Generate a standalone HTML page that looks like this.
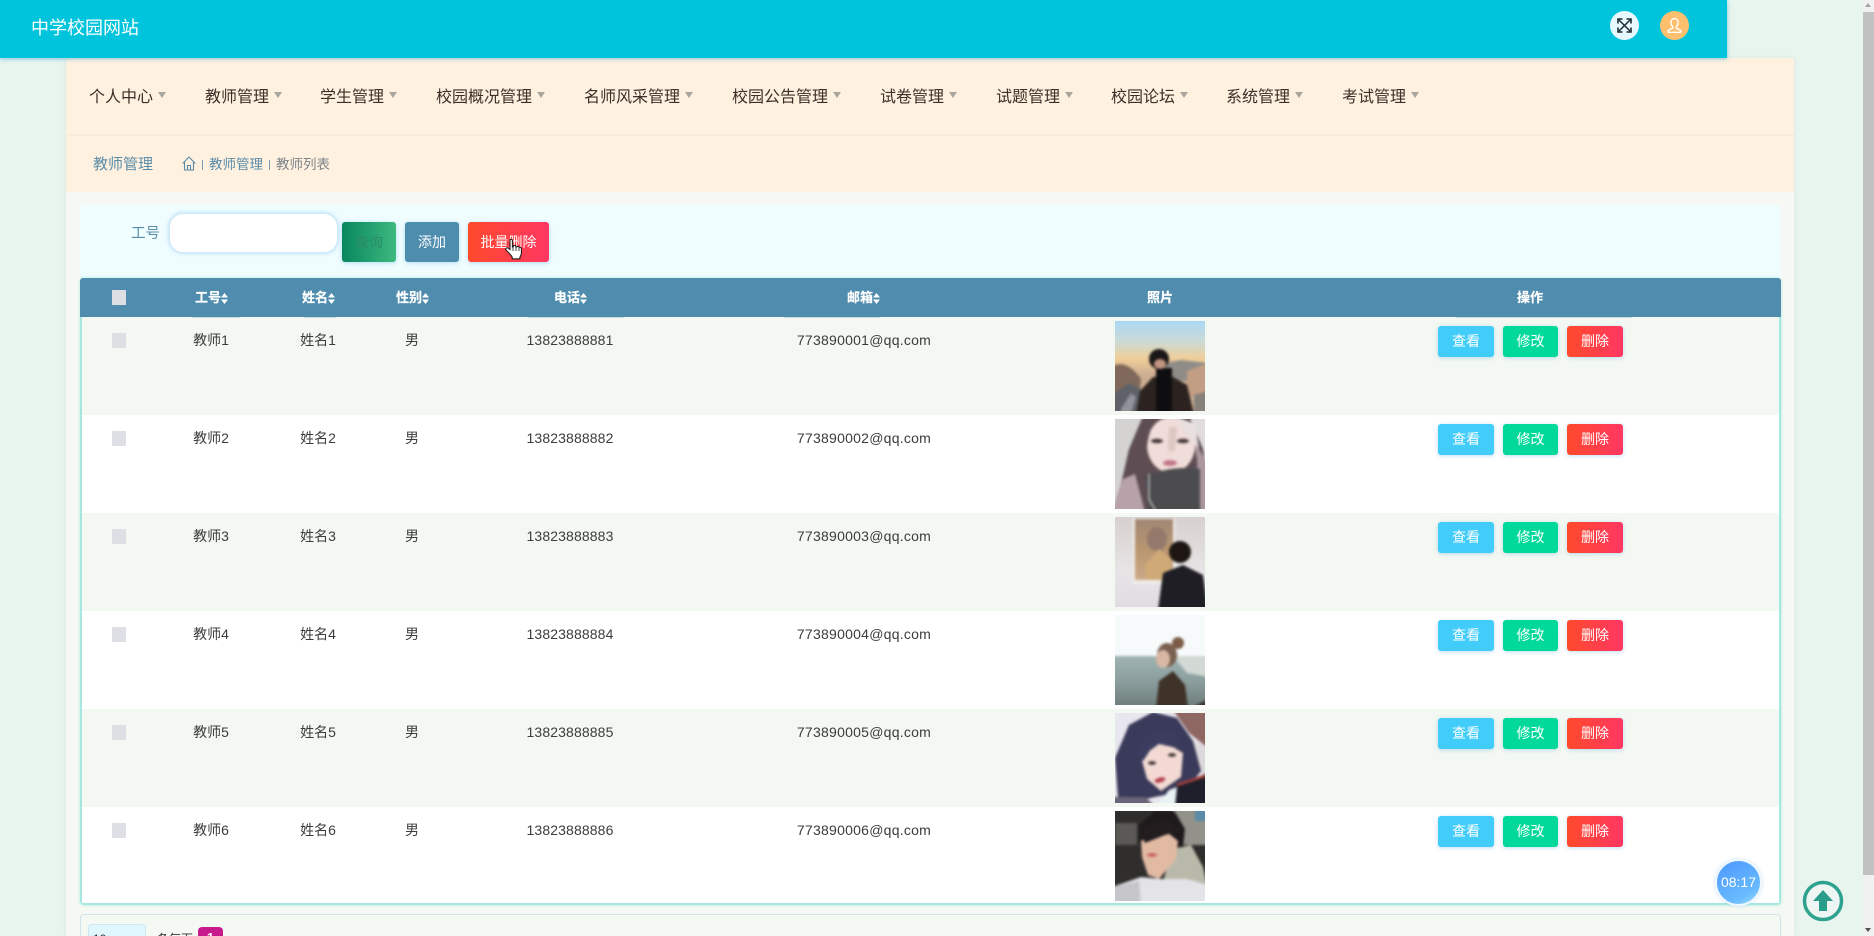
<!DOCTYPE html>
<html lang="zh"><head><meta charset="utf-8"><title>中学校园网站</title>
<style>
*{box-sizing:border-box}
html,body{margin:0;padding:0;width:1874px;height:936px;overflow:hidden;background:#E8F4EE;font-family:"Liberation Sans","Noto Sans CJK SC",sans-serif;color:#333}
div,span,svg{position:absolute}
#root{left:0;top:0;width:1874px;height:936px;overflow:hidden;background:#E8F4EE}
.nav{top:88px;height:20px;line-height:20px;font-size:16px;color:#3a3028;white-space:nowrap}
.car{top:92px;width:0;height:0;border-left:4.5px solid transparent;border-right:4.5px solid transparent;border-top:6px solid #aaa69e}
.btn{height:31px;line-height:30px;text-align:center;font-size:14px;color:#fff;border-radius:3px;box-shadow:0 1px 4px rgba(70,160,220,.35)}
.th{top:288px;height:20px;line-height:20px;font-size:13px;font-weight:bold;color:#fff;white-space:nowrap;-webkit-text-stroke:.2px #fff}
.ul{top:317px;height:1px;background:#ced9dc}
.r{left:82px;width:1697px;height:98px}
.odd{background:#F4F8F2}.even{background:#fff}
.cb{left:30px;top:16px;width:14px;height:15px;background:#DDDFE4}
.t{top:13px;height:20px;line-height:20px;font-size:14px;text-align:center;color:#3c3c3c;white-space:nowrap}
.c1{left:89px;width:80px}.c2{left:196px;width:80px}.c3{left:300px;width:60px}
.c4{left:408px;width:160px;letter-spacing:.12px}.c5{left:662px;width:240px;letter-spacing:.25px}
.b1{left:1356px;top:9px;width:56px;background:#42CCF9}
.b2{left:1421px;top:9px;width:55px;background:#00D99A}
.b3{left:1485px;top:9px;width:56px;background:linear-gradient(90deg,#FF4A2C,#FF3762)}
.ph{left:1033px;top:4px;width:90px;height:90px;overflow:hidden}
.ph g{filter:blur(1.2px)}
</style></head>
<body>
<div id="root">
<div style="left:0;top:0;width:1727px;height:58px;background:#00C4DC;box-shadow:0 1px 4px rgba(60,170,210,.6);z-index:3">
  <div style="left:31px;top:16px;height:24px;line-height:24px;font-size:18px;color:#fff;white-space:nowrap">中学校园网站</div>
  <div style="left:1610px;top:11px;width:29px;height:29px;border-radius:50%;background:#E8F8FF"></div>
  <svg style="left:1610px;top:11px" width="29" height="29" viewBox="0 0 29 29" fill="none" stroke="#1d2a33" stroke-width="1.5"><path d="M9 9L20 20M20 9L9 20"/><path d="M8 12.5V8H12.5M16.5 8H21V12.5M21 16.5V21H16.5M12.5 21H8V16.5" stroke-width="1.6"/></svg>
  <div style="left:1660px;top:11px;width:29px;height:29px;border-radius:50%;background:#FEBF6E"></div>
  <svg style="left:1660px;top:11px" width="29" height="29" viewBox="0 0 29 29" fill="none" stroke="#fff" stroke-width="1.4"><path d="M14.5 7.5c-2.4 0-3.6 1.9-3.6 4 0 1.8.8 3.2 1.8 4.1v1.6c-1.8.6-4.2 1.5-4.7 2.9-.2.6 0 1.2.7 1.2h11.6c.7 0 .9-.6.7-1.2-.5-1.4-2.9-2.3-4.7-2.9v-1.6c1-.9 1.8-2.3 1.8-4.1 0-2.1-1.2-4-3.6-4z"/></svg>
</div>

<div style="left:66px;top:58px;width:1728px;height:878px;background:#F6F9F3;box-shadow:0 0 3px rgba(200,215,205,.5)"></div>
<div style="left:66px;top:58px;width:1728px;height:134px;background:#FFF1E0"></div>
<div style="left:66px;top:134px;width:1728px;height:2px;background:#F8EBDB"></div>

<div class="nav" style="left:89px">个人中心</div><div class="car" style="left:158px"></div>
<div class="nav" style="left:205px">教师管理</div><div class="car" style="left:274px"></div>
<div class="nav" style="left:320px">学生管理</div><div class="car" style="left:389px"></div>
<div class="nav" style="left:436px">校园概况管理</div><div class="car" style="left:537px"></div>
<div class="nav" style="left:584px">名师风采管理</div><div class="car" style="left:685px"></div>
<div class="nav" style="left:732px">校园公告管理</div><div class="car" style="left:833px"></div>
<div class="nav" style="left:880px">试卷管理</div><div class="car" style="left:949px"></div>
<div class="nav" style="left:996px">试题管理</div><div class="car" style="left:1065px"></div>
<div class="nav" style="left:1111px">校园论坛</div><div class="car" style="left:1180px"></div>
<div class="nav" style="left:1226px">系统管理</div><div class="car" style="left:1295px"></div>
<div class="nav" style="left:1342px">考试管理</div><div class="car" style="left:1411px"></div>

<div style="left:93px;top:155px;height:20px;line-height:20px;font-size:15px;color:#5A8CA8;white-space:nowrap">教师管理</div>
<svg style="left:182px;top:156px" width="14" height="15" viewBox="0 0 14 15" fill="none" stroke="#5A8CA8" stroke-width="1.1"><path d="M.7 7.5L7 1l6.3 6.5M2.5 6v8h9V6M5.5 14V9.5h3V14"/></svg>
<div style="left:202px;top:160px;width:1px;height:10px;background:#7b9cb0"></div>
<div style="left:209px;top:155px;height:20px;line-height:20px;font-size:13.5px;color:#5A8CA8;white-space:nowrap">教师管理</div>
<div style="left:269px;top:160px;width:1px;height:10px;background:#7b9cb0"></div>
<div style="left:276px;top:155px;height:20px;line-height:20px;font-size:13.5px;color:#7d8488;white-space:nowrap">教师列表</div>

<div style="left:80px;top:205px;width:1701px;height:74px;background:#EFFDFF;border-radius:4px"></div>
<div style="left:131px;top:224px;height:20px;line-height:20px;font-size:14.5px;color:#5A8CA8;white-space:nowrap">工号</div>
<div style="left:169px;top:213px;width:169px;height:40px;background:#fff;border:1px solid #D2E9F8;border-radius:14px;box-shadow:0 0 4px rgba(120,190,240,.6)"></div>
<div class="btn" style="left:342px;top:222px;width:54px;height:40px;line-height:40px;background:linear-gradient(90deg,#08875F,#3DB97F);color:#2B8B66">查询</div>
<div class="btn" style="left:405px;top:222px;width:54px;height:40px;line-height:40px;background:#4F8DAF">添加</div>
<div class="btn" style="left:468px;top:222px;width:81px;height:40px;line-height:40px;background:linear-gradient(90deg,#FF4A2C,#FF3762)">批量删除</div>

<div style="left:80px;top:278px;width:1701px;height:627px;background:#fff;border:2px solid #A6E8E0;border-radius:4px;box-shadow:0 0 3px rgba(140,225,215,.7)"></div>
<div style="left:80px;top:278px;width:1701px;height:39px;background:#4F8CAE;border-radius:3px 3px 0 0"></div>
<div style="left:112px;top:290px;width:14px;height:15px;background:#DDDFE4"></div>
<div class="th" style="left:195px">工号</div><div class="th" style="left:302px">姓名</div><div class="th" style="left:396px">性别</div><div class="th" style="left:554px">电话</div><div class="th" style="left:847px">邮箱</div><div class="th" style="left:1147px">照片</div><div class="th" style="left:1517px">操作</div>
<svg style="left:221px;top:293px" width="7" height="11"><path d="M0 4.5L3.5 0L7 4.5ZM0 6.5L3.5 11L7 6.5Z" fill="#fff"/></svg>
<svg style="left:328px;top:293px" width="7" height="11"><path d="M0 4.5L3.5 0L7 4.5ZM0 6.5L3.5 11L7 6.5Z" fill="#fff"/></svg>
<svg style="left:422px;top:293px" width="7" height="11"><path d="M0 4.5L3.5 0L7 4.5ZM0 6.5L3.5 11L7 6.5Z" fill="#fff"/></svg>
<svg style="left:580px;top:293px" width="7" height="11"><path d="M0 4.5L3.5 0L7 4.5ZM0 6.5L3.5 11L7 6.5Z" fill="#fff"/></svg>
<svg style="left:873px;top:293px" width="7" height="11"><path d="M0 4.5L3.5 0L7 4.5ZM0 6.5L3.5 11L7 6.5Z" fill="#fff"/></svg>

<div class="r odd" style="top:317px"><div class="cb"></div><div class="t c1">教师1</div><div class="t c2">姓名1</div><div class="t c3">男</div><div class="t c4">13823888881</div><div class="t c5">773890001@qq.com</div>
<svg class="ph" viewBox="0 0 90 90"><defs><linearGradient id="s1" x1="0" y1="0" x2="0" y2="1"><stop offset="0" stop-color="#A6D8F8"/><stop offset=".25" stop-color="#CCDAD6"/><stop offset=".42" stop-color="#F0CE98"/><stop offset=".6" stop-color="#CBAD92"/></linearGradient></defs><g><rect x="-3" y="-3" width="96" height="96" fill="url(#s1)"/><path d="M50 42L66 39L93 42V60H50Z" fill="#8F8C88"/><path d="M72 50L93 42V76H72Z" fill="#C29E84"/><path d="M-3 45Q12 38 26 58L24 76H-3Z" fill="#80695A"/><path d="M-3 93V74L14 62L26 68L22 93Z" fill="#5E6268"/><path d="M6 88L16 72L21 76L16 93H6Z" fill="#90939A"/><path d="M21 93L25 70L38 56H58L72 64L79 93Z" fill="#2C2320"/><rect x="41" y="47" width="16" height="46" fill="#0E0E10"/><circle cx="44" cy="38" r="10" fill="#1B1717"/><ellipse cx="45" cy="43" rx="6" ry="5" fill="#C09480"/><path d="M79 93V74L93 70V93Z" fill="#87817C"/></g></svg>
<div class="btn b1">查看</div><div class="btn b2">修改</div><div class="btn b3">删除</div></div>

<div class="r even" style="top:415px"><div class="cb"></div><div class="t c1">教师2</div><div class="t c2">姓名2</div><div class="t c3">男</div><div class="t c4">13823888882</div><div class="t c5">773890002@qq.com</div>
<svg class="ph" viewBox="0 0 90 90"><g><rect x="-3" y="-3" width="96" height="96" fill="#D4D3D1"/><path d="M70 -3H93V40H75Z" fill="#E2DDDD"/><path d="M28 -3H74L88 30L93 60V93H-3L6 65L14 30Z" fill="#5E4E54"/><path d="M-3 93L8 60L20 55L30 93Z" fill="#B8A2AA"/><path d="M78 20L93 45V93H84L82 40Z" fill="#AC96A0"/><ellipse cx="56" cy="26" rx="24" ry="28" fill="#F0DCD8"/><path d="M32 28Q34 8 44 -3H30L22 28Z" fill="#5E4E54"/><path d="M60 -3L80 5L84 30L72 16Z" fill="#E8E0DE"/><ellipse cx="42" cy="22" rx="6" ry="2.2" fill="#44383A"/><ellipse cx="68" cy="22" rx="6" ry="2.2" fill="#44383A"/><path d="M54 8L62 8L60 32L53 32Z" fill="#DEC8C4"/><ellipse cx="55" cy="44" rx="7" ry="3" fill="#C47888"/><path d="M30 58Q55 46 85 50V93H34Z" fill="#4C4C4E"/><path d="M34 55V80Q38 88 42 93" stroke="#E8E8E8" stroke-width="1" fill="none"/></g></svg>
<div class="btn b1">查看</div><div class="btn b2">修改</div><div class="btn b3">删除</div></div>

<div class="r odd" style="top:513px"><div class="cb"></div><div class="t c1">教师3</div><div class="t c2">姓名3</div><div class="t c3">男</div><div class="t c4">13823888883</div><div class="t c5">773890003@qq.com</div>
<svg class="ph" viewBox="0 0 90 90"><defs><linearGradient id="s3" x1="0" y1="0" x2="0" y2="1"><stop offset="0" stop-color="#D6CFCD"/><stop offset=".6" stop-color="#E8E4E6"/><stop offset="1" stop-color="#DFDBE1"/></linearGradient><linearGradient id="s3b" x1="0" y1="0" x2="0" y2="1"><stop offset="0" stop-color="#A08774"/><stop offset=".5" stop-color="#B8966F"/><stop offset="1" stop-color="#CCAA88"/></linearGradient></defs><g><rect x="-3" y="-3" width="96" height="96" fill="url(#s3)"/><rect x="18" y="1" width="42" height="66" fill="#F0ECE8"/><rect x="20" y="2" width="38" height="61" fill="url(#s3b)"/><ellipse cx="42" cy="22" rx="10" ry="12" fill="#94796C"/><path d="M30 48L44 32L56 42L54 62H32Z" fill="#D0AA76"/><circle cx="65" cy="35" r="11" fill="#1D1612"/><path d="M43 93L48 56L68 48L88 58L93 93Z" fill="#1F1E25"/></g></svg>
<div class="btn b1">查看</div><div class="btn b2">修改</div><div class="btn b3">删除</div></div>

<div class="r even" style="top:611px"><div class="cb"></div><div class="t c1">教师4</div><div class="t c2">姓名4</div><div class="t c3">男</div><div class="t c4">13823888884</div><div class="t c5">773890004@qq.com</div>
<svg class="ph" viewBox="0 0 90 90"><defs><linearGradient id="s4" x1="0" y1="0" x2="0" y2="1"><stop offset="0" stop-color="#A0B4B4"/><stop offset=".5" stop-color="#8A9C9C"/><stop offset="1" stop-color="#6A7A76"/></linearGradient></defs><g><rect x="-3" y="-3" width="96" height="96" fill="#F7FAFB"/><rect x="-3" y="41" width="96" height="53" fill="url(#s4)"/><path d="M58 41H93V62L72 58Z" fill="#D2D8D4"/><circle cx="63" cy="28" r="6" fill="#7C5B48"/><ellipse cx="52" cy="40" rx="10" ry="12" fill="#7A6050"/><ellipse cx="48" cy="44" rx="7" ry="9" fill="#D8B8A4"/><path d="M41 93L44 66L58 56L70 70L73 93Z" fill="#3F3228"/><path d="M76 93L93 84V93Z" fill="#3C3532"/></g></svg>
<div class="btn b1">查看</div><div class="btn b2">修改</div><div class="btn b3">删除</div></div>

<div class="r odd" style="top:709px"><div class="cb"></div><div class="t c1">教师5</div><div class="t c2">姓名5</div><div class="t c3">男</div><div class="t c4">13823888885</div><div class="t c5">773890005@qq.com</div>
<svg class="ph" viewBox="0 0 90 90"><g><rect x="-3" y="-3" width="96" height="96" fill="#E8E6EE"/><path d="M58 -3H93V35L74 20Z" fill="#8E6662"/><path d="M78 28L93 35V62L82 60Z" fill="#DCD8DC"/><path d="M3 85L0 45L14 12L38 -1L62 5L78 28L86 58L70 78L40 84L22 88Z" fill="#3A3A5A"/><path d="M26 44L48 28L68 40L66 64L46 78L32 66Z" fill="#F2DAD3"/><path d="M20 40L32 20L60 18L66 36L40 30L28 48Z" fill="#3C3C5E"/><ellipse cx="37" cy="50" rx="4" ry="1.8" fill="#3A3030"/><ellipse cx="57" cy="42" rx="4" ry="1.8" fill="#3A3030"/><ellipse cx="45" cy="67" rx="5.5" ry="2.5" transform="rotate(-15 45 67)" fill="#B5404C"/><path d="M60 93L62 72L93 60V93Z" fill="#1F1F2B"/><path d="M62 72L93 62" stroke="#A84038" stroke-width="2.5"/><path d="M42 93L54 77L62 74L60 93Z" fill="#EAF2F4"/><path d="M-3 93V84L30 84L40 93Z" fill="#6A6478"/></g></svg>
<div class="btn b1">查看</div><div class="btn b2">修改</div><div class="btn b3">删除</div></div>

<div class="r even" style="top:807px;height:96px"><div class="cb"></div><div class="t c1">教师6</div><div class="t c2">姓名6</div><div class="t c3">男</div><div class="t c4">13823888886</div><div class="t c5">773890006@qq.com</div>
<svg class="ph" viewBox="0 0 90 90"><g><rect x="-3" y="-3" width="96" height="96" fill="#2F2E2C"/><path d="M58 -3H93V34H62Z" fill="#93928A"/><path d="M80 -3H93V10H80Z" fill="#5A8CA8"/><path d="M0 12H22V34H0Z" fill="#5A5955"/><path d="M58 38L76 34L88 56L93 78L45 80Z" fill="#B9B9AA"/><path d="M24 14L40 0L60 1L70 18L68 36L24 32Z" fill="#1E1A1C"/><path d="M26 30L48 18L63 30L61 48L44 68L33 64L27 46Z" fill="#E2BAA4"/><path d="M24 18L50 8L66 20L50 24L30 32Z" fill="#231D1F"/><ellipse cx="37" cy="44" rx="5" ry="2" fill="#C8685E"/><path d="M-3 93V76L26 66L46 68L72 68L93 74V93Z" fill="#E4E4E8"/><path d="M-3 93V76L24 70L26 93Z" fill="#C6C6CA"/></g></svg>
<div class="btn b1">查看</div><div class="btn b2">修改</div><div class="btn b3">删除</div></div>

<div class="ul" style="left:192px;width:48px"></div><div class="ul" style="left:304px;width:32px"></div><div class="ul" style="left:528px;width:96px"></div><div class="ul" style="left:784px;width:96px"></div><div class="ul" style="left:1456px;width:176px"></div>

<div style="left:80px;top:914px;width:1701px;height:40px;background:#F5F9F3;border:1px solid #CFE3EA;border-radius:4px"></div>
<div style="left:88px;top:924px;width:58px;height:30px;background:#E0F7FD;border:1px solid #CDE8F2;border-radius:4px"></div>
<div style="left:93px;top:929px;height:20px;line-height:20px;font-size:12px;color:#333">10</div>
<div style="left:157px;top:929px;height:20px;line-height:20px;font-size:12px;color:#333;white-space:nowrap">条每页</div>
<div style="left:198px;top:927px;width:25px;height:24px;line-height:22px;background:#C71B8D;border-radius:4px;color:#fff;font-size:13px;font-weight:bold;text-align:center">1</div>

<svg style="left:504px;top:238px;z-index:5" width="20" height="22" viewBox="0 0 20 22"><path d="M6 2.5c0-1.6 2.4-1.6 2.4 0V9l1-.3V8c.6-1 2-1 2.4 0v1l1-.1c.7-.7 1.9-.5 2.2.4l.8.1c.9-.2 1.6.5 1.6 1.3v4.5c0 1.6-1 2.6-1.5 4v1.7H8.2V19C7 17 4 14 2.2 12.2 1 11 2.6 9.2 4 10l2 1.5Z" fill="#fff" stroke="#111" stroke-width="1"/><path d="M9 9.5V13M12 9.5V13M15 10V13" stroke="#111" stroke-width=".8"/></svg>

<div style="left:1715px;top:859px;width:47px;height:47px;border-radius:50%;background:linear-gradient(150deg,#4A96FF,#69BCFF 75%,#A6DFFA);border:2px solid #EEF7FD;box-shadow:0 0 3px rgba(150,200,240,.5);color:#fff;font-size:14px;line-height:43px;text-align:center;z-index:4">08:17</div>

<svg style="left:1802px;top:880px;z-index:4" width="42" height="42" viewBox="0 0 42 42"><circle cx="21" cy="21" r="18.5" fill="#EEF6F4" stroke="#2FA28F" stroke-width="3.5"/><path d="M21 10L31 21H25V31H17V21H11Z" fill="#2A9D8A"/></svg>

<div style="left:1863px;top:0;width:11px;height:936px;background:#F1F1F1;z-index:6"></div>
<div style="left:1863px;top:12px;width:11px;height:863px;background:#C1C1C1;z-index:7"></div>
<div style="left:1865px;top:3px;width:0;height:0;border-left:3.5px solid transparent;border-right:3.5px solid transparent;border-bottom:4px solid #A3A3A3;z-index:7"></div>
<div style="left:1865px;top:928px;width:0;height:0;border-left:3.5px solid transparent;border-right:3.5px solid transparent;border-top:4px solid #505050;z-index:7"></div>
</div>
</body></html>
